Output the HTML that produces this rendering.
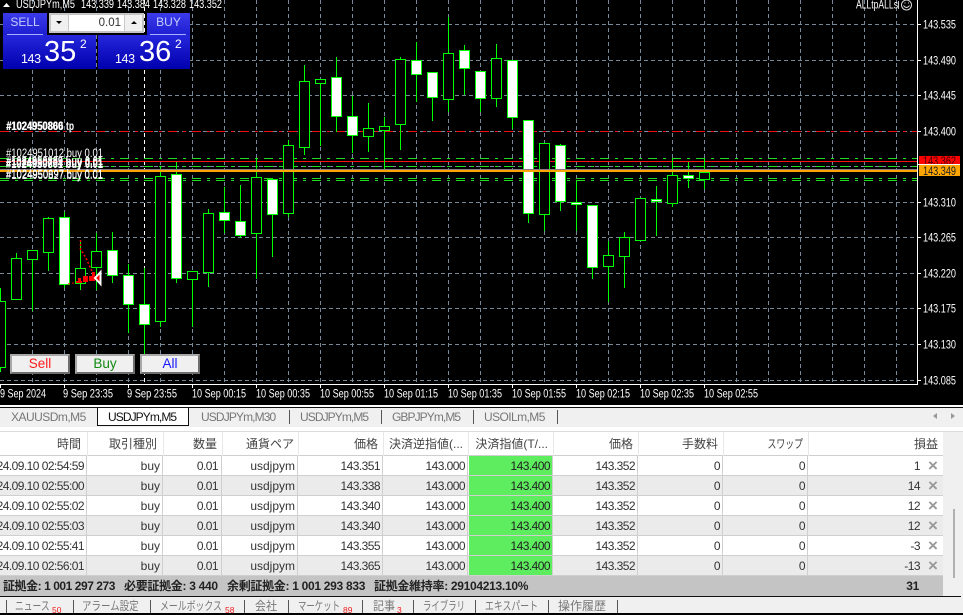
<!DOCTYPE html>
<html lang="ja"><head><meta charset="utf-8"><title>MT4</title>
<style>
html,body{margin:0;padding:0;background:#000;}
body{width:963px;height:613px;position:relative;overflow:hidden;font-family:"Liberation Sans","Noto Sans CJK JP",sans-serif;}
#chart{position:absolute;left:0;top:0;display:block;}
#chart text{font-family:"Liberation Sans",sans-serif;font-size:11.5px;fill:#fff;}
.a{position:absolute;white-space:nowrap;}
#bottom{position:absolute;left:0;top:405px;width:963px;height:208px;background:#f0f0f0;overflow:hidden;}
.tab{position:absolute;top:408px;height:18px;line-height:18px;font-size:12px;color:#777;white-space:nowrap;}
.sep{position:absolute;width:1px;background:#555;}
.row{position:absolute;left:0;width:943px;height:20px;line-height:20px;font-size:12px;color:#333;letter-spacing:-.55px;box-sizing:border-box;border-bottom:1px solid #cfcfcf;overflow:hidden;}
.row span{position:absolute;white-space:nowrap;}
.e{background:#ebebeb;}.w{background:#fff;}
.g{left:469px;top:0;width:83px;height:19px;background:#5eed5e;}
.c1{right:859px}.c2{right:783px;letter-spacing:0}.c3{right:725px}.c4{right:648px;letter-spacing:0}.c5{right:563px}.c6{right:478px}.c7{right:393px;color:#222}.c8{right:308px}.c9{right:223px}.c10{right:138px}.c11{right:23px}
.x{width:34px;text-align:center;right:-7px;color:#999;font-size:17px;font-weight:bold;letter-spacing:0;}
.vl{position:absolute;top:456px;width:1px;height:120px;background:#cfcfcf;}
.hl{position:absolute;top:432px;width:1px;height:24px;background:#e8e8e8;}
.h{position:absolute;top:432px;height:24px;line-height:24px;font-size:12px;color:#444;white-space:nowrap;}
.s{position:absolute;top:576px;height:20px;line-height:20px;font-size:12px;color:#222;font-weight:bold;white-space:nowrap;letter-spacing:-.3px;}
.b{position:absolute;top:598px;height:16px;line-height:16px;font-size:12px;color:#777;white-space:nowrap;transform-origin:left center;}
.n{position:absolute;top:606px;font-size:8.5px;line-height:9px;color:#f02020;white-space:nowrap;}
.btn{position:absolute;top:354px;width:60px;height:20px;box-sizing:border-box;background:#f0f0f0;border:2px solid;border-color:#a8a8a8 #6e6e6e #6e6e6e #a8a8a8;text-align:center;font-size:13.5px;line-height:16px;}
.tb{position:absolute;background:linear-gradient(#3b3bea,#1e1ed2);top:13px;height:22px;text-align:center;color:#c4ccff;font-size:12px;line-height:19px;}
.ul{position:absolute;top:34px;height:1px;background:#a8b0ff;}
.pb{position:absolute;top:35px;height:34px;background:linear-gradient(#2626dc,#0000ae);color:#fff;}
</style></head><body>
<svg id="chart" width="963" height="405" viewBox="0 0 963 405" xmlns="http://www.w3.org/2000/svg">
<rect width="963" height="405" fill="#000"/>
<g stroke="#778899" stroke-width="1" fill="none" stroke-dasharray="4 3">
<path d="M0 24.5H917M0 60.5H917M0 95.5H917M0 131.5H917M0 166.5H917M0 202.5H917M0 237.5H917M0 273.5H917M0 308.5H917M0 344.5H917M0 380.5H917"/>
<path d="M32.5 0V384M64.5 0V384M96.5 0V384M128.5 0V384M160.5 0V384M192.5 0V384M224.5 0V384M256.5 0V384M288.5 0V384M320.5 0V384M352.5 0V384M384.5 0V384M416.5 0V384M448.5 0V384M480.5 0V384M512.5 0V384M544.5 0V384M576.5 0V384M608.5 0V384M640.5 0V384M672.5 0V384M704.5 0V384M736.5 0V384M768.5 0V384M800.5 0V384M832.5 0V384M864.5 0V384M896.5 0V384"/>
</g>
<path d="M144.5 0V384" stroke="#fff" stroke-dasharray="4 3"/>
<path d="M0 131.5H917" stroke="#f01010" stroke-dasharray="9 6 3 6"/>
<g stroke="#22dd22" fill="none" stroke-dasharray="9 6 3 6">
<path d="M0 158.5H917M0 166.5H917M0 178.5H917M0 180.5H917"/>
</g>
<path d="M0 161.5H917" stroke="#ff1010"/>
<!-- candles -->
<g stroke="#00ff00" stroke-width="1">
<path fill="none" d="M0.5 288V372M16.5 253V258M32.5 259V311M48.5 217V271M64.5 212V288M80.5 240V290M96.5 233V290M112.5 232V283M128.5 264V333M144.5 268V355M160.5 166V327M176.5 162V283M192.5 279V327M208.5 209V287M224.5 187V233M240.5 185V238M256.5 158V279M272.5 178V257M288.5 140V217M304.5 65V155M320.5 83V146M336.5 57V132M352.5 96V153M368.5 103V152M384.5 117V169M400.5 57V150M416.5 42V102M432.5 97V121M448.5 17V112M464.5 45V95M480.5 98V112M496.5 44V107M512.5 117V129M528.5 213V223M544.5 214V231M560.5 144V211M576.5 180V231M592.5 267V279M608.5 241V302M624.5 232V288M656.5 186V236M672.5 158V207M688.5 162V188M704.5 158V189"/>
<g fill="#000">
<rect x="-4.5" y="301.5" width="10" height="66"/><rect x="11.5" y="258.5" width="10" height="41"/><rect x="27.5" y="250.5" width="10" height="9"/><rect x="43.5" y="218.5" width="10" height="34"/><rect x="75.5" y="268.5" width="10" height="15"/><rect x="91.5" y="251.5" width="10" height="16"/><rect x="155.5" y="176.5" width="10" height="145"/><rect x="187.5" y="271.5" width="10" height="8"/><rect x="203.5" y="213.5" width="10" height="59"/><rect x="251.5" y="177.5" width="10" height="56"/><rect x="283.5" y="145.5" width="10" height="68"/><rect x="299.5" y="81.5" width="10" height="66"/><rect x="315.5" y="79.5" width="10" height="4"/><rect x="363.5" y="128.5" width="10" height="8"/><rect x="379.5" y="126.5" width="10" height="4"/><rect x="395.5" y="59.5" width="10" height="65"/><rect x="443.5" y="53.5" width="10" height="46"/><rect x="491.5" y="58.5" width="10" height="40"/><rect x="539.5" y="143.5" width="10" height="71"/><rect x="603.5" y="255.5" width="10" height="11"/><rect x="619.5" y="237.5" width="10" height="19"/><rect x="635.5" y="198.5" width="10" height="42"/><rect x="667.5" y="175.5" width="10" height="28"/><rect x="699.5" y="172.5" width="10" height="7"/>
</g>
<g fill="#fff">
<rect x="59.5" y="217.5" width="10" height="67"/><rect x="107.5" y="250.5" width="10" height="25"/><rect x="123.5" y="275.5" width="10" height="29"/><rect x="139.5" y="304.5" width="10" height="20"/><rect x="171.5" y="174.5" width="10" height="104"/><rect x="219.5" y="212.5" width="10" height="8"/><rect x="235.5" y="221.5" width="10" height="14"/><rect x="267.5" y="179.5" width="10" height="35"/><rect x="331.5" y="77.5" width="10" height="39"/><rect x="347.5" y="116.5" width="10" height="19"/><rect x="411.5" y="60.5" width="10" height="14"/><rect x="427.5" y="72.5" width="10" height="25"/><rect x="459.5" y="50.5" width="10" height="18"/><rect x="475.5" y="71.5" width="10" height="27"/><rect x="507.5" y="60.5" width="10" height="57"/><rect x="523.5" y="120.5" width="10" height="93"/><rect x="555.5" y="145.5" width="10" height="56"/><rect x="571.5" y="202.5" width="10" height="2"/><rect x="587.5" y="205.5" width="10" height="62"/><rect x="651.5" y="199.5" width="10" height="2"/><rect x="683.5" y="175.5" width="10" height="3"/>
</g>
</g>
<!-- arrows -->
<path d="M80.5 240V250L83 253L87 260L90 267L93 273" stroke="#ff0000" stroke-width="1.5" stroke-dasharray="2 2" fill="none"/>
<path d="M68 284L78 282" stroke="#ff0000" stroke-dasharray="2 2" fill="none"/>
<path d="M78 278h3v5h-3zM83 276h5v6h-5zM89 276h3v5h-3zM92 272h3v9h-3zM76 281h6v2h-6z" fill="#ff0000"/>
<path d="M100.5 272L95 278L100.5 284Z" fill="#ff0000" stroke="#fff" stroke-width="2"/>
<!-- price line -->
<rect x="0" y="169" width="917" height="1" fill="#8a7a8a"/>
<rect x="0" y="170" width="917" height="2" fill="#ffa500"/>
<!-- order labels -->
<g>
<text x="6" y="130" textLength="57" lengthAdjust="spacingAndGlyphs" font-weight="bold">#1024950800</text>
<text x="6.5" y="130" textLength="57" lengthAdjust="spacingAndGlyphs" font-weight="bold">#1024950866</text>
<text x="66" y="130" textLength="8" lengthAdjust="spacingAndGlyphs" font-weight="bold">tp</text>
<text x="6" y="157" textLength="97" lengthAdjust="spacingAndGlyphs">#1024951012 buy 0.01</text>
<text x="6" y="165" textLength="97" lengthAdjust="spacingAndGlyphs" font-weight="bold">#1024950889 buy 0.01</text>
<text x="6" y="167" textLength="97" lengthAdjust="spacingAndGlyphs" font-weight="bold">#1024950734 buy 0.01</text>
<text x="6" y="168" textLength="97" lengthAdjust="spacingAndGlyphs" font-weight="bold">#1024950801 buy 0.01</text>
<text x="6" y="178" textLength="97" lengthAdjust="spacingAndGlyphs">#1024950697 buy 0.01</text>
<text x="6" y="179" textLength="97" lengthAdjust="spacingAndGlyphs">#1024950827 buy 0.01</text>
</g>
<!-- axes -->
<path d="M917.5 0V384.5H0" stroke="#fff" fill="none"/>
<path d="M917 24.5h4M917 60.5h4M917 95.5h4M917 131.5h4M917 202.5h4M917 237.5h4M917 273.5h4M917 308.5h4M917 344.5h4M917 380.5h4M0.5 384v4M64.5 384v4M128.5 384v4M192.5 384v4M256.5 384v4M320.5 384v4M384.5 384v4M448.5 384v4M512.5 384v4M576.5 384v4M640.5 384v4M704.5 384v4" stroke="#fff"/>
<g>
<text x="923" y="28.5" textLength="33" lengthAdjust="spacingAndGlyphs">143.535</text>
<text x="923" y="64.5" textLength="33" lengthAdjust="spacingAndGlyphs">143.490</text>
<text x="923" y="99.5" textLength="33" lengthAdjust="spacingAndGlyphs">143.445</text>
<text x="923" y="135.5" textLength="33" lengthAdjust="spacingAndGlyphs">143.400</text>
<text x="923" y="206.5" textLength="33" lengthAdjust="spacingAndGlyphs">143.310</text>
<text x="923" y="241.5" textLength="33" lengthAdjust="spacingAndGlyphs">143.265</text>
<text x="923" y="277.5" textLength="33" lengthAdjust="spacingAndGlyphs">143.220</text>
<text x="923" y="312.5" textLength="33" lengthAdjust="spacingAndGlyphs">143.175</text>
<text x="923" y="348.5" textLength="33" lengthAdjust="spacingAndGlyphs">143.130</text>
<text x="923" y="384.5" textLength="33" lengthAdjust="spacingAndGlyphs">143.085</text>
</g>
<rect x="919" y="156" width="41" height="8" fill="#ff0000"/>
<clipPath id="cp"><rect x="919" y="156" width="41" height="8"/></clipPath>
<text x="923" y="165" textLength="33" lengthAdjust="spacingAndGlyphs" style="fill:#400000" clip-path="url(#cp)">143.362</text>
<rect x="918" y="164" width="42" height="1" fill="#fff"/>
<rect x="919" y="165" width="41" height="11" fill="#ffa500"/>
<text x="923" y="175" textLength="33" lengthAdjust="spacingAndGlyphs" style="fill:#222">143.349</text>
<!-- time -->
<g>
<text x="0" y="397.5" textLength="46" lengthAdjust="spacingAndGlyphs">9 Sep 2024</text>
<text x="63" y="397.5" textLength="50" lengthAdjust="spacingAndGlyphs">9 Sep 23:35</text>
<text x="127" y="397.5" textLength="50" lengthAdjust="spacingAndGlyphs">9 Sep 23:55</text>
<text x="192" y="397.5" textLength="54" lengthAdjust="spacingAndGlyphs">10 Sep 00:15</text>
<text x="256" y="397.5" textLength="54" lengthAdjust="spacingAndGlyphs">10 Sep 00:35</text>
<text x="320" y="397.5" textLength="54" lengthAdjust="spacingAndGlyphs">10 Sep 00:55</text>
<text x="384" y="397.5" textLength="54" lengthAdjust="spacingAndGlyphs">10 Sep 01:15</text>
<text x="448" y="397.5" textLength="54" lengthAdjust="spacingAndGlyphs">10 Sep 01:35</text>
<text x="512" y="397.5" textLength="54" lengthAdjust="spacingAndGlyphs">10 Sep 01:55</text>
<text x="576" y="397.5" textLength="54" lengthAdjust="spacingAndGlyphs">10 Sep 02:15</text>
<text x="640" y="397.5" textLength="54" lengthAdjust="spacingAndGlyphs">10 Sep 02:35</text>
<text x="704" y="397.5" textLength="54" lengthAdjust="spacingAndGlyphs">10 Sep 02:55</text>
</g>
<!-- title -->
<path d="M3 7L6.5 3L10 7Z" fill="#fff"/>
<text x="16" y="8" textLength="59" lengthAdjust="spacingAndGlyphs">USDJPYm,M5</text>
<text x="81" y="8" textLength="33" lengthAdjust="spacingAndGlyphs">143.339</text>
<text x="117" y="8" textLength="33" lengthAdjust="spacingAndGlyphs">143.384</text>
<text x="153" y="8" textLength="33" lengthAdjust="spacingAndGlyphs">143.328</text>
<text x="189" y="8" textLength="33" lengthAdjust="spacingAndGlyphs">143.352</text>
<text x="856" y="8.5" textLength="42" lengthAdjust="spacingAndGlyphs">ALLtpALLs</text>
<path d="M898.5 1V9" stroke="#ccc"/>
<circle cx="906.5" cy="5" r="5" fill="none" stroke="#ddd"/>
<path d="M903.5 5.5Q906.5 9.5 909.5 5.5M904.5 3h1M908 3h1" stroke="#ddd" fill="none"/>
</svg>

<!-- trade panel -->
<div class="tb" style="left:3px;width:44px;">SELL</div>
<div class="tb" style="left:147px;width:43px;">BUY</div>
<div class="pb" style="left:3px;width:93px;"></div>
<div class="pb" style="left:98px;width:92px;"></div>
<div class="ul" style="left:7px;width:36px;"></div>
<div class="ul" style="left:150px;width:36px;"></div>
<div class="a" style="left:21px;top:52px;font-size:12.5px;line-height:14px;color:#fff;letter-spacing:-.4px;">143</div>
<div class="a" style="left:44px;top:34px;font-size:29px;line-height:36px;color:#fff;">35</div>
<div class="a" style="left:80px;top:38px;font-size:12px;line-height:12px;color:#fff;">2</div>
<div class="a" style="left:115px;top:52px;font-size:12.5px;line-height:14px;color:#fff;letter-spacing:-.4px;">143</div>
<div class="a" style="left:139px;top:34px;font-size:29px;line-height:36px;color:#fff;">36</div>
<div class="a" style="left:175px;top:38px;font-size:12px;line-height:12px;color:#fff;">2</div>
<div class="a" style="left:49px;top:13px;width:95px;height:20px;box-sizing:border-box;border:2px solid #c4c4c4;background:#f0f0f0;">
<div class="a" style="left:18px;top:0;width:55px;height:16px;background:#fff;text-align:right;font-size:11.5px;line-height:17px;color:#333;box-sizing:border-box;padding-right:3px;">0.01</div>
<div class="a" style="left:17px;top:0;width:1px;height:16px;background:#c8c8c8;"></div>
<div class="a" style="left:73px;top:0;width:1px;height:16px;background:#c8c8c8;"></div>
<svg class="a" style="left:0;top:0" width="91" height="16"><path d="M5 6h6l-3 3zM80 9h6l-3-3z" fill="#000"/></svg>
</div>

<div class="btn" style="left:10px;color:#ff1a1a;">Sell</div>
<div class="btn" style="left:75px;color:#128a12;">Buy</div>
<div class="btn" style="left:140px;color:#1a1aff;">All</div>

<!-- bottom section -->
<div id="bottom"></div>
<div class="a" style="left:0;top:405px;width:963px;height:2px;background:#fff;"></div>
<div class="a" style="left:0;top:407px;width:963px;height:1px;background:#111;"></div>
<div class="a" style="left:0;top:427px;width:963px;height:5px;background:#fff;"></div>
<div class="a" style="left:0;top:431px;width:963px;height:1px;background:#dcdcdc;"></div>
<div class="a" style="left:97px;top:407px;width:92px;height:19px;box-sizing:border-box;background:#fff;border:1px solid #111;"></div>
<div class="tab" style="left:11px;letter-spacing:-.52px;">XAUUSDm,M5</div>
<div class="tab" style="left:108px;color:#111;letter-spacing:-.92px;">USDJPYm,M5</div>
<div class="tab" style="left:201px;letter-spacing:-.88px;">USDJPYm,M30</div>
<div class="sep" style="left:289px;top:410px;height:14px;"></div>
<div class="tab" style="left:300px;letter-spacing:-.92px;">USDJPYm,M5</div>
<div class="sep" style="left:381px;top:410px;height:14px;"></div>
<div class="tab" style="left:392px;letter-spacing:-.92px;">GBPJPYm,M5</div>
<div class="sep" style="left:473px;top:410px;height:14px;"></div>
<div class="tab" style="left:484px;letter-spacing:-.58px;">USOILm,M5</div>
<div class="sep" style="left:557px;top:410px;height:14px;"></div>
<svg class="a" style="left:930px;top:411px" width="28" height="10"><path d="M7 2v6l-4-3zM21 2v6l4-3z" fill="#999"/></svg>

<!-- table header -->
<div class="a" style="left:0;top:432px;width:943px;height:23px;background:#fff;border-bottom:1px solid #cfcfcf;"></div>
<div class="hl" style="left:87px"></div><div class="hl" style="left:163px"></div><div class="hl" style="left:222px"></div><div class="hl" style="left:298px"></div><div class="hl" style="left:383px"></div><div class="hl" style="left:468px"></div><div class="hl" style="left:553px"></div><div class="hl" style="left:638px"></div><div class="hl" style="left:723px"></div><div class="hl" style="left:808px"></div>
<div class="h" style="right:882px;">時間</div>
<div class="h" style="right:806px;">取引種別</div>
<div class="h" style="right:746px;">数量</div>
<div class="h" style="right:669px;">通貨ペア</div>
<div class="h" style="right:585px;">価格</div>
<div class="h" style="right:500px;">決済逆指値(...</div>
<div class="h" style="right:415px;">決済指値(T/...</div>
<div class="h" style="right:330px;">価格</div>
<div class="h" style="right:245px;">手数料</div>
<div class="h" style="right:160px;transform:scaleX(.74);transform-origin:right center;">スワップ</div>
<div class="h" style="right:25px;">損益</div>

<!-- rows -->
<div class="row w" style="top:456px;"><span class="g"></span><span class="c1">24.09.10 02:54:59</span><span class="c2">buy</span><span class="c3">0.01</span><span class="c4">usdjpym</span><span class="c5">143.351</span><span class="c6">143.000</span><span class="c7">143.400</span><span class="c8">143.352</span><span class="c9">0</span><span class="c10">0</span><span class="c11">1</span><span class="x">×</span></div>
<div class="row e" style="top:476px;"><span class="g"></span><span class="c1">24.09.10 02:55:00</span><span class="c2">buy</span><span class="c3">0.01</span><span class="c4">usdjpym</span><span class="c5">143.338</span><span class="c6">143.000</span><span class="c7">143.400</span><span class="c8">143.352</span><span class="c9">0</span><span class="c10">0</span><span class="c11">14</span><span class="x">×</span></div>
<div class="row w" style="top:496px;"><span class="g"></span><span class="c1">24.09.10 02:55:02</span><span class="c2">buy</span><span class="c3">0.01</span><span class="c4">usdjpym</span><span class="c5">143.340</span><span class="c6">143.000</span><span class="c7">143.400</span><span class="c8">143.352</span><span class="c9">0</span><span class="c10">0</span><span class="c11">12</span><span class="x">×</span></div>
<div class="row e" style="top:516px;"><span class="g"></span><span class="c1">24.09.10 02:55:03</span><span class="c2">buy</span><span class="c3">0.01</span><span class="c4">usdjpym</span><span class="c5">143.340</span><span class="c6">143.000</span><span class="c7">143.400</span><span class="c8">143.352</span><span class="c9">0</span><span class="c10">0</span><span class="c11">12</span><span class="x">×</span></div>
<div class="row w" style="top:536px;"><span class="g"></span><span class="c1">24.09.10 02:55:41</span><span class="c2">buy</span><span class="c3">0.01</span><span class="c4">usdjpym</span><span class="c5">143.355</span><span class="c6">143.000</span><span class="c7">143.400</span><span class="c8">143.352</span><span class="c9">0</span><span class="c10">0</span><span class="c11">-3</span><span class="x">×</span></div>
<div class="row e" style="top:556px;"><span class="g"></span><span class="c1">24.09.10 02:56:01</span><span class="c2">buy</span><span class="c3">0.01</span><span class="c4">usdjpym</span><span class="c5">143.365</span><span class="c6">143.000</span><span class="c7">143.400</span><span class="c8">143.352</span><span class="c9">0</span><span class="c10">0</span><span class="c11">-13</span><span class="x">×</span></div>
<div class="vl" style="left:86px"></div><div class="vl" style="left:162px"></div><div class="vl" style="left:221px"></div><div class="vl" style="left:297px"></div><div class="vl" style="left:382px"></div><div class="vl" style="left:467px"></div><div class="vl" style="left:552px"></div><div class="vl" style="left:637px"></div><div class="vl" style="left:722px"></div><div class="vl" style="left:807px"></div>

<!-- summary -->
<div class="a" style="left:0;top:576px;width:943px;height:20px;background:#c4c4c4;"></div>
<div class="s" style="left:3px;letter-spacing:-.45px;">証拠金: 1 001 297 273</div>
<div class="s" style="left:124px;">必要証拠金: 3 440</div>
<div class="s" style="left:227px;">余剰証拠金: 1 001 293 833</div>
<div class="s" style="left:374px;">証拠金維持率: 29104213.10%</div>
<div class="s" style="right:44px;">31</div>
<div class="a" style="left:0;top:596px;width:961px;height:1px;background:#111;"></div>
<div class="a" style="left:953px;top:509px;width:2px;height:69px;background:#b0b0b0;"></div>

<!-- bottom tabs -->
<div class="sep" style="left:6px;top:600px;height:13px;"></div>
<div class="b" style="left:15px;transform:scaleX(.73);">ニュース</div><div class="n" style="left:52px;">50</div>
<div class="sep" style="left:73px;top:600px;height:13px;"></div>
<div class="b" style="left:82px;transform:scaleX(.79);">アラーム設定</div>
<div class="sep" style="left:150px;top:600px;height:13px;"></div>
<div class="b" style="left:160px;transform:scaleX(.74);">メールボックス</div><div class="n" style="left:225px;">58</div>
<div class="sep" style="left:244px;top:600px;height:13px;"></div>
<div class="b" style="left:255px;transform:scaleX(.92);">会社</div>
<div class="sep" style="left:288px;top:600px;height:13px;"></div>
<div class="b" style="left:298px;transform:scaleX(.7);">マーケット</div><div class="n" style="left:343px;">89</div>
<div class="sep" style="left:362px;top:600px;height:13px;"></div>
<div class="b" style="left:373px;transform:scaleX(.92);">記事</div><div class="n" style="left:397px;">3</div>
<div class="sep" style="left:413px;top:600px;height:13px;"></div>
<div class="b" style="left:423px;transform:scaleX(.7);">ライブラリ</div>
<div class="sep" style="left:475px;top:600px;height:13px;"></div>
<div class="b" style="left:485px;transform:scaleX(.74);">エキスパート</div>
<div class="sep" style="left:548px;top:600px;height:13px;"></div>
<div class="b" style="left:558px;">操作履歴</div>
<div class="sep" style="left:617px;top:600px;height:13px;"></div>
</body></html>
